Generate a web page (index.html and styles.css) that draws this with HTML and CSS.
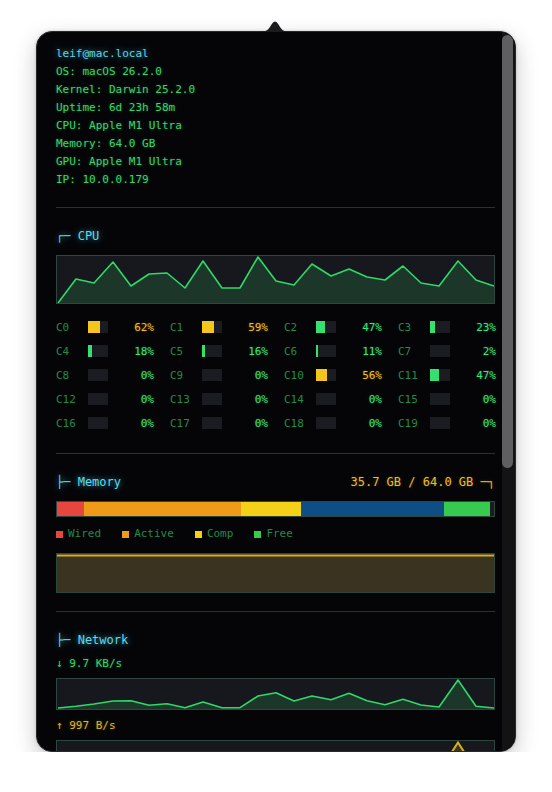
FILE: index.html
```html
<!DOCTYPE html>
<html lang="en">
<head>
    <meta charset="UTF-8">
    <title>System Monitor</title>
    <link rel="stylesheet" href="styles.css">
</head>
<body>

    <div class="popover">
        <svg class="arrow" width="30" height="13" viewBox="0 0 30 13">
            <path d="M0 13 C7 13 9 10 11.5 5.5 Q15 -0.5 18.5 5.5 C21 10 23 13 30 13 Z" fill="#1c1c1f"/>
        </svg>

        <div class="panel">
            <div class="content">
                <div class="info">
                    <div class="host">leif@mac.local</div>
                    <div>OS: macOS 26.2.0</div>
                    <div>Kernel: Darwin 25.2.0</div>
                    <div>Uptime: 6d 23h 58m</div>
                    <div>CPU: Apple M1 Ultra</div>
                    <div>Memory: 64.0 GB</div>
                    <div>GPU: Apple M1 Ultra</div>
                    <div>IP: 10.0.0.179</div>
                </div>

                <hr class="divider">

                <!-- CPU -->
                <div class="section-head">
                    <span class="title">┌─ CPU</span>
                </div>
                <div class="graph cpu-graph">
                    <svg viewBox="0 0 437 47" preserveAspectRatio="none">
                        <polygon class="fill-green" points="1,47 1,47 19,23 37,27 56,6 74,30 92,18 110,17 128,32 146,5 165,32 183,32 201,1 219,25 237,29 255,8 274,20 292,13 310,21 328,24 346,10 364,27 382,30 401,5 419,24 437,30 437,47"/>
                        <polyline class="line-green" points="1,47 19,23 37,27 56,6 74,30 92,18 110,17 128,32 146,5 165,32 183,32 201,1 219,25 237,29 255,8 274,20 292,13 310,21 328,24 346,10 364,27 382,30 401,5 419,24 437,30"/>
                    </svg>
                </div>

                <div class="cores">
                    <div class="core"><span class="label">C0</span><span class="bar"><span class="fill hot" style="width: 62%"></span></span><span class="pct hot">62%</span></div>
                    <div class="core"><span class="label">C1</span><span class="bar"><span class="fill hot" style="width: 59%"></span></span><span class="pct hot">59%</span></div>
                    <div class="core"><span class="label">C2</span><span class="bar"><span class="fill" style="width: 47%"></span></span><span class="pct">47%</span></div>
                    <div class="core"><span class="label">C3</span><span class="bar"><span class="fill" style="width: 23%"></span></span><span class="pct">23%</span></div>

                    <div class="core"><span class="label">C4</span><span class="bar"><span class="fill" style="width: 18%"></span></span><span class="pct">18%</span></div>
                    <div class="core"><span class="label">C5</span><span class="bar"><span class="fill" style="width: 16%"></span></span><span class="pct">16%</span></div>
                    <div class="core"><span class="label">C6</span><span class="bar"><span class="fill" style="width: 11%"></span></span><span class="pct">11%</span></div>
                    <div class="core"><span class="label">C7</span><span class="bar"></span><span class="pct">2%</span></div>

                    <div class="core"><span class="label">C8</span><span class="bar"></span><span class="pct">0%</span></div>
                    <div class="core"><span class="label">C9</span><span class="bar"></span><span class="pct">0%</span></div>
                    <div class="core"><span class="label">C10</span><span class="bar"><span class="fill hot" style="width: 56%"></span></span><span class="pct hot">56%</span></div>
                    <div class="core"><span class="label">C11</span><span class="bar"><span class="fill" style="width: 47%"></span></span><span class="pct">47%</span></div>

                    <div class="core"><span class="label">C12</span><span class="bar"></span><span class="pct">0%</span></div>
                    <div class="core"><span class="label">C13</span><span class="bar"></span><span class="pct">0%</span></div>
                    <div class="core"><span class="label">C14</span><span class="bar"></span><span class="pct">0%</span></div>
                    <div class="core"><span class="label">C15</span><span class="bar"></span><span class="pct">0%</span></div>

                    <div class="core"><span class="label">C16</span><span class="bar"></span><span class="pct">0%</span></div>
                    <div class="core"><span class="label">C17</span><span class="bar"></span><span class="pct">0%</span></div>
                    <div class="core"><span class="label">C18</span><span class="bar"></span><span class="pct">0%</span></div>
                    <div class="core"><span class="label">C19</span><span class="bar"></span><span class="pct">0%</span></div>
                </div>

                <hr class="divider">

                <!-- Memory -->
                <div class="section-head">
                    <span class="title">├─ Memory</span>
                    <span class="mem-total">35.7 GB / 64.0 GB ─┐</span>
                </div>
                <div class="mem-bar">
                    <span class="seg wired" style="width: 6.2%"></span>
                    <span class="seg active" style="width: 35.8%"></span>
                    <span class="seg comp" style="width: 13.9%"></span>
                    <span class="seg other" style="width: 32.6%"></span>
                    <span class="seg free" style="width: 10.5%"></span>
                </div>
                <div class="legend">
                    <span class="key"><i class="wired"></i>Wired</span>
                    <span class="key"><i class="active"></i>Active</span>
                    <span class="key"><i class="comp"></i>Comp</span>
                    <span class="key"><i class="free"></i>Free</span>
                </div>
                <div class="graph mem-graph">
                    <svg viewBox="0 0 437 38" preserveAspectRatio="none">
                        <rect class="fill-yellow" x="0" y="1" width="437" height="37"/>
                        <line class="line-yellow" x1="0" y1="1.5" x2="437" y2="1.5"/>
                    </svg>
                </div>

                <hr class="divider">

                <!-- Network -->
                <div class="section-head">
                    <span class="title">├─ Network</span>
                </div>
                <div class="rate down">↓ 9.7 KB/s</div>
                <div class="graph net-graph">
                    <svg viewBox="0 0 437 30" preserveAspectRatio="none">
                        <polygon class="fill-green" points="1,30 1,29 19,27.3 37,25 56,22 74,21.7 92,26.3 110,24.7 128,28.7 146,23 165,28.7 183,28.7 201,17 219,13.7 237,22 255,17 274,20.7 292,14.3 310,21.7 328,25.7 346,20.3 364,26 382,28 401,1 419,27.3 437,29 437,30"/>
                        <polyline class="line-green" points="1,29 19,27.3 37,25 56,22 74,21.7 92,26.3 110,24.7 128,28.7 146,23 165,28.7 183,28.7 201,17 219,13.7 237,22 255,17 274,20.7 292,14.3 310,21.7 328,25.7 346,20.3 364,26 382,28 401,1 419,27.3 437,29"/>
                    </svg>
                </div>
                <div class="rate up">↑ 997 B/s</div>
                <div class="graph net-graph">
                    <svg viewBox="0 0 437 30" preserveAspectRatio="none">
                        <polygon class="fill-yellow" points="1,30 1,29.5 383,29.5 401,1.5 419,29.5 437,29.5 437,30"/>
                        <polyline class="line-yellow" points="1,29.5 383,29.5 401,1.5 419,29.5 437,29.5"/>
                    </svg>
                </div>
            </div>

            <div class="scrollbar">
                <div class="thumb"></div>
            </div>
        </div>
    </div>

</body>
</html>
```

FILE: styles.css
```css
body {
    margin: 0;
    background-color: #fff;
    font-family: "DejaVu Sans Mono", "Liberation Mono", monospace;
    font-size: 11px;
}

.popover {
    position: relative;
    width: 480px;
    margin: 31px 0 0 36px;
}

.arrow {
    position: absolute;
    top: -12px;
    left: 224px;
}

.panel {
    box-sizing: border-box;
    display: flex;
    height: 721px;
    background-color: #050508;
    border: 1px solid #29292c;
    border-radius: 16px;
    overflow: hidden;
    box-shadow: 0 8px 22px rgba(0, 0, 0, 0.22), 0 0 3px rgba(0, 0, 0, 0.2);
}

.content {
    flex: 1;
    padding: 13px 7px 0 19px;
    overflow: hidden;
}

.scrollbar {
    width: 13px;
    background-color: #131314;
}

.thumb {
    width: 11px;
    height: 433px;
    margin-top: 3px;
    background-color: #5f5f61;
    border-radius: 6px;
}

/* system info */
.info {
    line-height: 18px;
    color: #3ad56c;
    text-shadow: 0 0 3px rgba(60, 215, 110, 0.35);
}

.host {
    color: #5cd6e4;
    text-shadow: 0 0 6px rgba(80, 210, 235, 0.7);
}

.divider {
    border: none;
    border-top: 1px solid #233532;
    margin: 18px 0 19px;
}

/* section headers */
.section-head {
    display: flex;
    justify-content: space-between;
    font-size: 12px;
    line-height: 18px;
}

.title {
    color: #5cdbe9;
    text-shadow: 0 0 6px rgba(80, 215, 240, 0.75);
}

.mem-total {
    color: #ecbc22;
    text-shadow: 0 0 3px rgba(236, 188, 34, 0.3);
}

/* graphs */
.graph {
    border: 1px solid #2b4740;
    background-color: #16181d;
    margin-top: 10px;
}

.graph svg {
    display: block;
    width: 100%;
    height: 100%;
}

.cpu-graph {
    height: 47px;
}

.mem-graph {
    height: 38px;
    margin-top: 10px;
}

.net-graph {
    height: 30px;
    margin-top: 5px;
}

.fill-green {
    fill: #1d3a2b;
    opacity: 0.9;
}

.line-green {
    fill: none;
    stroke: #2fd867;
    stroke-width: 1.6;
    stroke-linejoin: round;
    vector-effect: non-scaling-stroke;
}

.fill-yellow {
    fill: #39331f;
}

.line-yellow {
    fill: none;
    stroke: #d9ae1c;
    stroke-width: 2;
    vector-effect: non-scaling-stroke;
}

/* cpu cores */
.cores {
    display: grid;
    grid-template-columns: repeat(4, 98px);
    grid-auto-rows: 24px;
    column-gap: 16px;
    margin-top: 11px;
}

.core {
    display: flex;
    align-items: center;
}

.label {
    width: 32px;
    color: #1f8c4a;
}

.bar {
    width: 20px;
    height: 12px;
    background-color: #1b1c21;
}

.fill {
    display: block;
    height: 100%;
    background-color: #35e070;
}

.fill.hot {
    background-color: #f4c61c;
}

.pct {
    flex: 1;
    text-align: right;
    color: #3ee57a;
    text-shadow: 0 0 3px rgba(62, 229, 122, 0.35);
}

.pct.hot {
    color: #f0c11d;
    text-shadow: 0 0 3px rgba(240, 193, 29, 0.35);
}

/* memory */
.mem-bar {
    display: flex;
    height: 14px;
    margin-top: 10px;
    border: 1px solid #2b4740;
    background-color: #1b1c21;
}

.seg.wired,
.key .wired {
    background-color: #e6463d;
}

.seg.active,
.key .active {
    background-color: #ee9b18;
}

.seg.comp,
.key .comp {
    background-color: #f4d118;
}

.seg.other {
    background-color: #0f4e85;
}

.seg.free,
.key .free {
    background-color: #36cb4e;
}

.legend {
    display: flex;
    gap: 21px;
    margin-top: 8px;
    line-height: 18px;
    color: #1f8c4a;
}

.key {
    display: flex;
    align-items: center;
}

.key i {
    width: 7px;
    height: 7px;
    margin-right: 5px;
}

/* network */
.rate {
    margin-top: 6px;
    line-height: 18px;
}

.rate.down {
    color: #2fd867;
    text-shadow: 0 0 3px rgba(47, 216, 103, 0.35);
}

.rate.up {
    margin-top: 7px;
    color: #e2b51f;
    text-shadow: 0 0 3px rgba(226, 181, 31, 0.35);
}
```
